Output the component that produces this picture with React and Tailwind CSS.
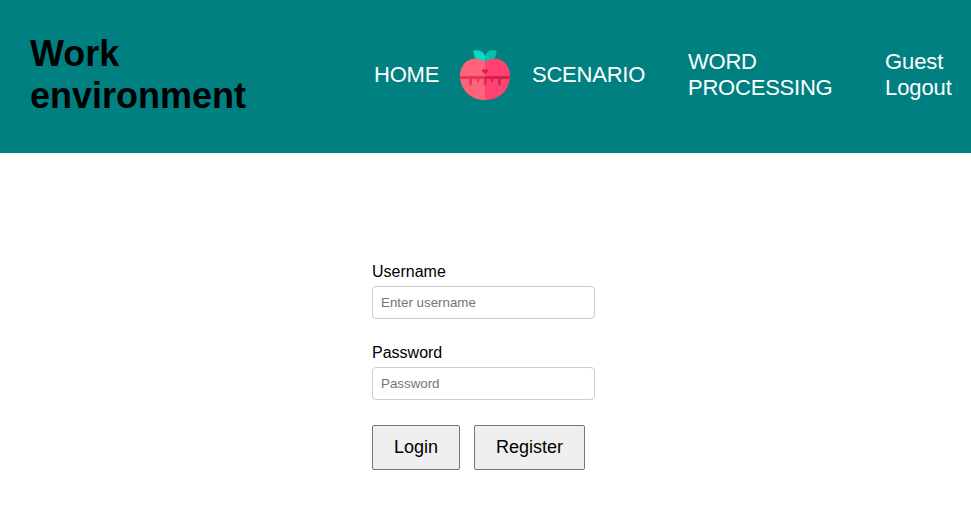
function AppleLogo() {
  return (
    <svg viewBox="0 0 50 50" className="block h-[50px] w-[50px]" aria-hidden="true">
      <path d="M13.5 .5Q23 -.5 25 6V11.5Q13 12 13.5 .5Z" fill="#00dfc3" />
      <path d="M36.5 .5Q27 -.5 25 6V11.5Q37 12 36.5 .5Z" fill="#00c3ac" />
      <path d="M25 11.5C20.5 9 17 8.1 13 8.7C5.5 10 0 17 0 25C0 40 10.5 50 25 50Z" fill="#ff637b" />
      <path d="M25 11.5C29.5 9 33 8.1 37 8.7C44.5 10 50 17 50 25C50 40 39.5 50 25 50Z" fill="#ff426f" />
      <path d="M.1 26H25V35.2Q23.6 35.2 23.6 33.8V29H19.2V31Q19.2 32.2 18 32.2Q16.8 32.2 16.8 31V29H12V33.8Q12 35.2 10.6 35.2Q9.2 35.2 9.2 33.8V29H.6Z" fill="#ea3458" />
      <path d="M25 26H49.9L49.4 29H40.8V33.8Q40.8 35.2 39.4 35.2Q38 35.2 38 33.8V29H33.4V31Q33.4 32.2 32.2 32.2Q31 32.2 31 31V29H26.4V33.8Q26.4 35.2 25 35.2Z" fill="#d52050" />
      <path d="M25 24.1L22.5 21.7C21 20 23.5 17.8 25 20C26.5 17.8 29 20 27.5 21.7Z" fill="#d52050" />
    </svg>
  );
}

function Field({ label, type, placeholder }) {
  return (
    <label className="mb-6 block h-[57px]">
      <span className="block h-[24px] pt-px text-base leading-[18px]">{label}</span>
      <input
        type={type}
        placeholder={placeholder}
        className="block h-[33px] w-[223px] rounded-[4px] border border-[#ccc] bg-white px-2 text-[13.333px] leading-[15px] placeholder:text-[#757575]"
      />
    </label>
  );
}

export default function App() {
  return (
    <div className="h-[505px] w-[971px] overflow-hidden bg-white text-black [font-family:'Liberation_Sans',Arial,sans-serif]">
      <header className="flex h-[153px] bg-[#008080] pl-[30px]">
        <h1 className="w-[344px] shrink-0 pt-[33px] text-[36px] leading-[42px] font-bold">
          Work
          <br />
          environment
        </h1>
        <nav className="flex h-[150px] items-center text-[22px] leading-[26px] tracking-[-0.22px] whitespace-nowrap text-white">
          <a className="w-[86px] shrink-0">HOME</a>
          <div className="w-[72px] shrink-0"><AppleLogo /></div>
          <a className="w-[156px] shrink-0">SCENARIO</a>
          <a className="w-[197px] shrink-0">
            WORD
            <br />
            PROCESSING
          </a>
          <div className="shrink-0 tracking-[-0.1px]">
            Guest
            <br />
            Logout
          </div>
        </nav>
      </header>
      <form className="ml-[372px] pt-[109px]" onSubmit={(e) => e.preventDefault()}>
        <Field label="Username" type="text" placeholder="Enter username" />
        <Field label="Password" type="password" placeholder="Password" />
        <div className="mt-[25px] flex gap-[14px]">
          <button className="h-[45px] w-[88px] rounded-[2px] border border-[#767676] bg-[#efefef] pb-[2px] text-[18px] leading-5">
            Login
          </button>
          <button className="h-[45px] w-[111px] rounded-[2px] border border-[#767676] bg-[#efefef] pb-[2px] text-[18px] leading-5">
            Register
          </button>
        </div>
      </form>
    </div>
  );
}
